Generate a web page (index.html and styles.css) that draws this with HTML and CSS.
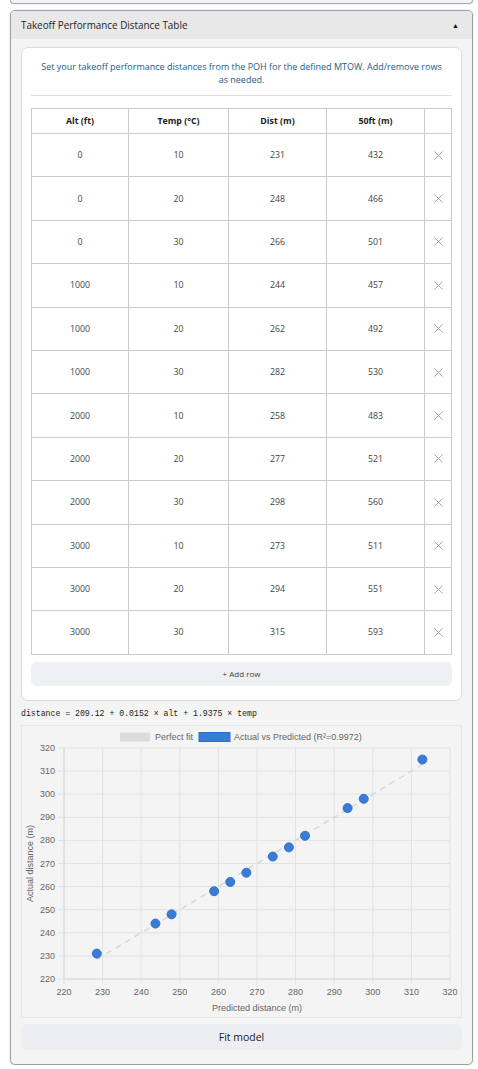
FILE: index.html
```html
<!DOCTYPE html>
<html>
<head>
<meta charset="utf-8">
<link rel="stylesheet" href="styles.css">
</head>
<body>
<div class="prev-panel"></div>
<section class="panel">
  <div class="panel-head">
    <span class="panel-title">Takeoff Performance Distance Table</span>
    <span class="caret">▲</span>
  </div>
  <div class="panel-body">
    <div class="card">
      <p class="desc">Set your takeoff performance distances from the POH for the defined MTOW. Add/remove rows as needed.</p>
      <table class="perf">
        <colgroup>
          <col class="c1"><col class="c2"><col class="c3"><col class="c4"><col class="c5">
        </colgroup>
        <thead>
          <tr><th>Alt (ft)</th><th>Temp (°C)</th><th>Dist (m)</th><th>50ft (m)</th><th></th></tr>
        </thead>
        <tbody>
          <tr><td>0</td><td>10</td><td>231</td><td>432</td><td class="del"><svg class="x" viewBox="0 0 10 10"><path d="M0.5 0.5L9.5 9.5M9.5 0.5L0.5 9.5"/></svg></td></tr>
          <tr><td>0</td><td>20</td><td>248</td><td>466</td><td class="del"><svg class="x" viewBox="0 0 10 10"><path d="M0.5 0.5L9.5 9.5M9.5 0.5L0.5 9.5"/></svg></td></tr>
          <tr><td>0</td><td>30</td><td>266</td><td>501</td><td class="del"><svg class="x" viewBox="0 0 10 10"><path d="M0.5 0.5L9.5 9.5M9.5 0.5L0.5 9.5"/></svg></td></tr>
          <tr><td>1000</td><td>10</td><td>244</td><td>457</td><td class="del"><svg class="x" viewBox="0 0 10 10"><path d="M0.5 0.5L9.5 9.5M9.5 0.5L0.5 9.5"/></svg></td></tr>
          <tr><td>1000</td><td>20</td><td>262</td><td>492</td><td class="del"><svg class="x" viewBox="0 0 10 10"><path d="M0.5 0.5L9.5 9.5M9.5 0.5L0.5 9.5"/></svg></td></tr>
          <tr><td>1000</td><td>30</td><td>282</td><td>530</td><td class="del"><svg class="x" viewBox="0 0 10 10"><path d="M0.5 0.5L9.5 9.5M9.5 0.5L0.5 9.5"/></svg></td></tr>
          <tr><td>2000</td><td>10</td><td>258</td><td>483</td><td class="del"><svg class="x" viewBox="0 0 10 10"><path d="M0.5 0.5L9.5 9.5M9.5 0.5L0.5 9.5"/></svg></td></tr>
          <tr><td>2000</td><td>20</td><td>277</td><td>521</td><td class="del"><svg class="x" viewBox="0 0 10 10"><path d="M0.5 0.5L9.5 9.5M9.5 0.5L0.5 9.5"/></svg></td></tr>
          <tr><td>2000</td><td>30</td><td>298</td><td>560</td><td class="del"><svg class="x" viewBox="0 0 10 10"><path d="M0.5 0.5L9.5 9.5M9.5 0.5L0.5 9.5"/></svg></td></tr>
          <tr><td>3000</td><td>10</td><td>273</td><td>511</td><td class="del"><svg class="x" viewBox="0 0 10 10"><path d="M0.5 0.5L9.5 9.5M9.5 0.5L0.5 9.5"/></svg></td></tr>
          <tr><td>3000</td><td>20</td><td>294</td><td>551</td><td class="del"><svg class="x" viewBox="0 0 10 10"><path d="M0.5 0.5L9.5 9.5M9.5 0.5L0.5 9.5"/></svg></td></tr>
          <tr><td>3000</td><td>30</td><td>315</td><td>593</td><td class="del"><svg class="x" viewBox="0 0 10 10"><path d="M0.5 0.5L9.5 9.5M9.5 0.5L0.5 9.5"/></svg></td></tr>
        </tbody>
      </table>
      <button class="add-row">+ Add row</button>
    </div>
    <div class="formula">distance = 209.12 + 0.0152 × alt + 1.9375 × temp</div>
    <div class="chart-box">
      <svg class="chart" width="439" height="291" viewBox="0 0 439 291">
        <g class="grid">
          <path d="M42 22V258M80.6 22V258M119.2 22V258M157.8 22V258M196.4 22V258M235 22V258M273.6 22V258M312.2 22V258M350.8 22V258M389.4 22V258M428 22V258"/>
          <path d="M36 253H428M36 229.9H428M36 206.8H428M36 183.7H428M36 160.6H428M36 137.5H428M36 114.4H428M36 91.3H428M36 68.2H428M36 45.1H428M36 22H428"/>
        </g>
        <path class="axis" d="M42 22V253H428"/>
        <g class="yticks">
          <text x="33" y="256">220</text>
          <text x="33" y="232.9">230</text>
          <text x="33" y="209.8">240</text>
          <text x="33" y="186.7">250</text>
          <text x="33" y="163.6">260</text>
          <text x="33" y="140.5">270</text>
          <text x="33" y="117.4">280</text>
          <text x="33" y="94.3">290</text>
          <text x="33" y="71.2">300</text>
          <text x="33" y="48.1">310</text>
          <text x="33" y="25">320</text>
        </g>
        <g class="xticks">
          <text x="42" y="269">220</text>
          <text x="80.6" y="269">230</text>
          <text x="119.2" y="269">240</text>
          <text x="157.8" y="269">250</text>
          <text x="196.4" y="269">260</text>
          <text x="235" y="269">270</text>
          <text x="273.6" y="269">280</text>
          <text x="312.2" y="269">290</text>
          <text x="350.8" y="269">300</text>
          <text x="389.4" y="269">310</text>
          <text x="428" y="269">320</text>
        </g>
        <text class="xtitle" x="235" y="284.5">Predicted distance (m)</text>
        <text class="ytitle" transform="translate(11 137.5) rotate(-90)">Actual distance (m)</text>
        <rect class="leg-fit" x="98" y="6.5" width="30" height="9"/>
        <text class="leg" x="133" y="14.2">Perfect fit</text>
        <rect class="leg-pts" x="177" y="6.5" width="31" height="9"/>
        <text class="leg" x="212" y="14.2">Actual vs Predicted (R²=0.9972)</text>
        <path class="fit" d="M74.79 233.36L400.38 38.53"/>
        <g class="pts">
          <circle cx="74.79" cy="227.59" r="4.5"/>
          <circle cx="149.58" cy="188.32" r="4.5"/>
          <circle cx="224.37" cy="146.74" r="4.5"/>
          <circle cx="133.46" cy="197.56" r="4.5"/>
          <circle cx="208.25" cy="155.98" r="4.5"/>
          <circle cx="283.04" cy="109.78" r="4.5"/>
          <circle cx="192.13" cy="165.22" r="4.5"/>
          <circle cx="266.92" cy="121.33" r="4.5"/>
          <circle cx="341.71" cy="72.82" r="4.5"/>
          <circle cx="250.81" cy="130.57" r="4.5"/>
          <circle cx="325.59" cy="82.06" r="4.5"/>
          <circle cx="400.38" cy="33.55" r="4.5"/>
        </g>
      </svg>
    </div>
    <button class="fit-btn">Fit model</button>
  </div>
</section>
</body>
</html>
```
FILE: styles.css
```css
html, body {
  margin: 0;
  padding: 0;
  background: #ffffff;
}
body {
  font-family: "Open Sans", "Noto Sans", sans-serif;
  color: #222;
}
.prev-panel {
  margin-left: 10px;
  width: 461px;
  height: 3px;
  border: 1px solid #a8a8a8;
  border-top: none;
  border-radius: 0 0 5px 5px;
  background: #f4f4f4;
  box-shadow: 0 0 2px rgba(110, 160, 230, 0.35);
}
.panel {
  margin: 6px 0 0 10px;
  width: 461px;
  border: 1px solid #a0a0a0;
  border-radius: 5px;
  background: #f4f4f4;
  box-shadow: 0 0 2px rgba(110, 160, 230, 0.45);
  overflow: hidden;
}
.panel-head {
  display: flex;
  align-items: center;
  justify-content: space-between;
  height: 28px;
  padding: 0 13px 0 10px;
  background: #e8e8e8;
}
.panel-title {
  font-size: 9.9px;
  color: #1e1e1e;
}
.caret {
  font-size: 7px;
  color: #111;
}
.panel-body {
  padding: 8px 10px 14px 10px;
}
.card {
  background: #ffffff;
  border: 1px solid #dcdcdc;
  border-radius: 7px;
  padding: 10px 9px 14px 9px;
}
.desc {
  margin: 0 0 12px 0;
  padding: 2px 10px 9px 10px;
  border-bottom: 1px solid #dedede;
  text-align: center;
  font-size: 9px;
  line-height: 13px;
  color: #1c5c86;
}
.perf {
  width: 420px;
  border-collapse: collapse;
  table-layout: fixed;
  font-size: 8.8px;
}
.c1 { width: 97px; }
.c2 { width: 100px; }
.c3 { width: 98px; }
.c4 { width: 98px; }
.c5 { width: 27px; }
.perf th, .perf td {
  border: 1px solid #cbcbcb;
  text-align: center;
  padding: 0;
}
.perf th {
  height: 24px;
  font-weight: 700;
  color: #222;
}
.perf td {
  height: 42.4px;
  color: #444;
}
.del {
  line-height: 0;
}
.x {
  width: 9px;
  height: 9px;
  fill: none;
  stroke: #a6a6a6;
  stroke-width: 1.1;
}
.add-row {
  display: block;
  width: 100%;
  height: 24px;
  margin-top: 7px;
  border: none;
  border-radius: 6px;
  background: #eef0f3;
  font-family: "Open Sans", "Noto Sans", sans-serif;
  font-size: 8px;
  color: #444;
}
.formula {
  margin: 7px 0 0 0;
  height: 12px;
  line-height: 12px;
  font-family: "Liberation Mono", "DejaVu Sans Mono", monospace;
  font-size: 8.2px;
  color: #222;
}
.chart-box {
  margin-top: 5px;
  width: 439px;
  height: 291px;
  border: 1px solid #e6e6e6;
  background: #f4f4f4;
}
.chart {
  display: block;
  font-family: "Liberation Sans", Arial, sans-serif;
}
.grid path {
  fill: none;
  stroke: #e2e2e2;
  stroke-width: 1;
}
.axis {
  fill: none;
  stroke: #dadada;
  stroke-width: 1;
}
.yticks text {
  font-size: 9px;
  fill: #666;
  text-anchor: end;
}
.xticks text {
  font-size: 9px;
  fill: #666;
  text-anchor: middle;
}
.xtitle, .ytitle {
  font-size: 9px;
  fill: #666;
  text-anchor: middle;
}
.leg {
  font-size: 9px;
  fill: #666;
}
.leg-fit {
  fill: #dcdcdc;
}
.leg-pts {
  fill: #3a7bd5;
  stroke: #2f6fcf;
  stroke-width: 1;
}
.fit {
  fill: none;
  stroke: #d8d8d8;
  stroke-width: 1.5;
  stroke-dasharray: 6 5;
}
.pts circle {
  fill: #3a7bd5;
  stroke: #3572cc;
  stroke-width: 1;
}
.fit-btn {
  display: block;
  width: 100%;
  height: 26px;
  margin-top: 6px;
  border: none;
  border-radius: 6px;
  background: #eceef2;
  font-family: "Open Sans", "Noto Sans", sans-serif;
  font-size: 10.5px;
  color: #222;
}
```
